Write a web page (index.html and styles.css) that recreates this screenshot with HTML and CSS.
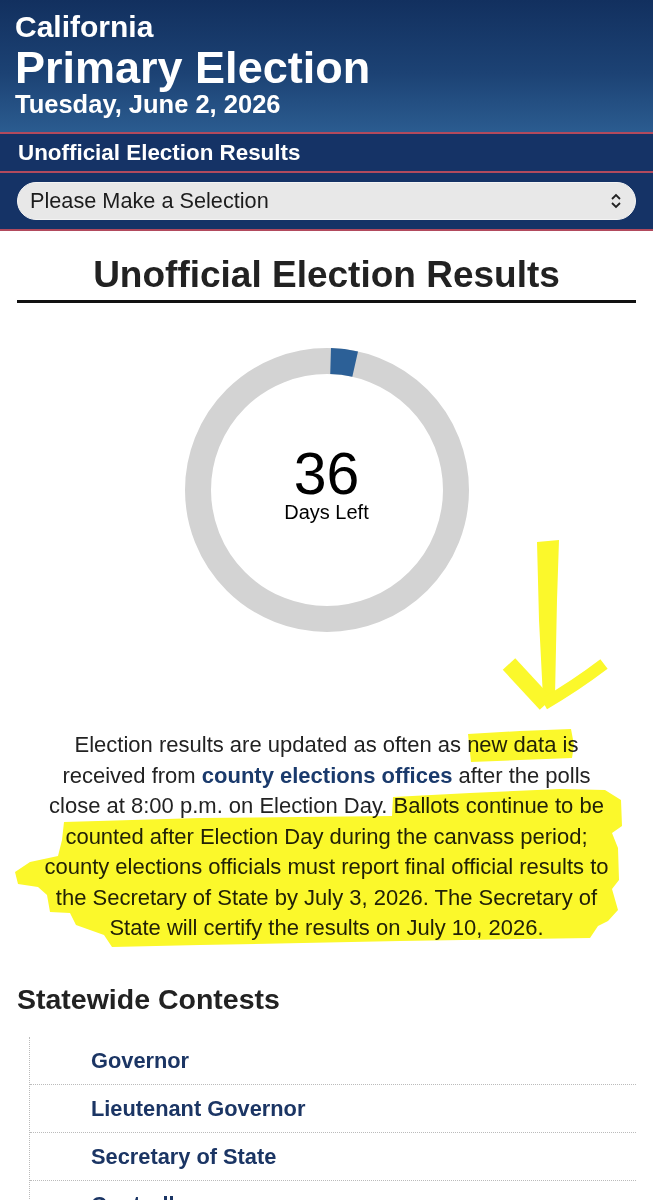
FILE: index.html
```html
<!DOCTYPE html>
<html>
<head>
  <title>California Primary Election - Unofficial Election Results</title>
  <link rel="stylesheet" href="styles.css">
</head>
<body>
  <div id="page">
    <div id="header">
      <div class="state">California</div>
      <div class="election">Primary Election</div>
      <div class="date">Tuesday, June 2, 2026</div>
    </div>

    <div id="titleBar">Unofficial Election Results</div>

    <div id="selectBar">
      <div class="select-box">
        <span>Please Make a Selection</span>
        <svg class="chevrons" width="12" height="18" viewBox="0 0 12 18">
          <path d="M2 7 L6 3 L10 7" fill="none" stroke="#222" stroke-width="1.8"/>
          <path d="M2 11 L6 15 L10 11" fill="none" stroke="#222" stroke-width="1.8"/>
        </svg>
      </div>
    </div>

    <div id="content">
      <h1 class="page-title">Unofficial Election Results</h1>

      <!-- countdown dial -->
      <div class="dial">
        <svg width="288" height="288" viewBox="0 0 288 288">
          <circle cx="144" cy="144" r="129" fill="none" stroke="#d3d3d3" stroke-width="26"/>
          <circle cx="144" cy="144" r="129" fill="none" stroke="#2c6097" stroke-width="26"
                  stroke-dasharray="24.8 800" transform="rotate(-88.4 144 144)"/>
        </svg>
        <div class="dial-text">
          <div class="days">36</div>
          <div class="days-label">Days Left</div>
        </div>
      </div>

      <p class="notice">
        Election results are updated as often as new data is received from
        <a href="#">county elections offices</a> after the polls close at 8:00 p.m. on
        Election Day. Ballots continue to be counted after Election Day during the canvass
        period; county elections officials must report final official results to the
        Secretary of State by July 3, 2026. The Secretary of State will certify the
        results on July 10, 2026.
      </p>

      <h2 class="section-title">Statewide Contests</h2>
      <ul class="contest-list">
        <li><a href="#">Governor</a></li>
        <li><a href="#">Lieutenant Governor</a></li>
        <li><a href="#">Secretary of State</a></li>
        <li><a href="#">Controller</a></li>
      </ul>
    </div>

    <!-- yellow marker annotations drawn over the page -->
    <svg class="marker" width="653" height="1200" viewBox="0 0 653 1200">
      <g fill="#fbf82b">
        <polygon points="468,734 520,731 571,729 574,745 572,758 520,760 471,762"/>
        <polygon points="393,797 470,793 560,789 605,790 621,800 622,826 612,833 618,848 619,880 612,889 618,910 608,921 598,926 590,938 400,941 200,945 112,947 104,935 76,925 70,913 50,912 47,895 38,887 18,884 15,872 30,862 58,856 62,840 64,822 200,818 392,816"/>
        <polygon points="537,542 559,540 557,600 555,696 543,698 539,620"/>
      </g>
      <g fill="none" stroke="#fbf82b" stroke-linecap="butt">
        <path d="M509 664 L546 704" stroke-width="17"/>
        <path d="M604 664 Q575 686 544 704" stroke-width="12"/>
      </g>
    </svg>
  </div>
</body>
</html>
```

FILE: styles.css
```css
body {
  margin: 0;
  font-family: "Liberation Sans", Arial, Helvetica, sans-serif;
  color: #222;
  background: #fff;
}

#page {
  position: relative;
  width: 653px;
  height: 1200px;
  overflow: hidden;
}

#header {
  background: linear-gradient(to bottom, #12305f 0%, #1c4274 55%, #2b5c90 100%);
  color: #fff;
  font-weight: bold;
  padding: 12px 15px 15px;
  border-bottom: 2px solid #b24a5d;
}

#header .state {
  font-size: 30px;
  line-height: 30px;
}

#header .election {
  font-size: 45px;
  line-height: 45px;
  margin-top: 3px;
}

#header .date {
  font-size: 25.5px;
  line-height: 26px;
  margin-top: 1px;
}

#titleBar {
  background-color: #153366;
  color: #fff;
  font-weight: bold;
  font-size: 22.4px;
  height: 37px;
  line-height: 37px;
  padding-left: 18px;
  border-bottom: 2px solid #b24a5d;
}

#selectBar {
  background-color: #153366;
  padding: 9px 17px 9px;
  border-bottom: 2px solid #b24a5d;
}

.select-box {
  display: flex;
  align-items: center;
  justify-content: space-between;
  height: 36px;
  padding: 0 13px 0 12px;
  background-color: #e8e8e8;
  border: 1px solid #f4f4f4;
  border-radius: 19px;
  color: #1c1c1c;
  font-size: 21.7px;
}

#content {
  padding: 0 17px 40px;
}

.page-title {
  margin: 25px 0 0;
  padding-bottom: 7px;
  border-bottom: 3px solid #111;
  text-align: center;
  font-size: 37px;
  line-height: 37px;
  color: #222;
}

.dial {
  display: grid;
  place-items: center;
  margin-top: 43px;
}

.dial svg,
.dial .dial-text {
  grid-area: 1 / 1;
}

.dial-text {
  text-align: center;
  color: #000;
  margin-top: -12px;
}

.days {
  font-size: 59px;
  line-height: 58px;
  margin-bottom: -2px;
}

.days-label {
  font-size: 20px;
  line-height: 22px;
}

.notice {
  margin: 96px auto 0;
  width: 576px;
  text-align: center;
  font-size: 22px;
  line-height: 30.5px;
  color: #222;
}

.notice a {
  color: #1a3a6c;
  font-weight: bold;
  text-decoration: none;
}

.section-title {
  margin: 41px 0 0;
  font-size: 28.5px;
  line-height: 28px;
  color: #222;
}

.contest-list {
  list-style: none;
  margin: 24px 0 0 12px;
  padding: 0;
  border-left: 1px dotted #bbb;
}

.contest-list li {
  height: 47px;
  line-height: 47px;
  padding-left: 61px;
  border-bottom: 1px dotted #bbb;
}

.contest-list a {
  color: #1b3564;
  font-weight: bold;
  font-size: 21.8px;
  text-decoration: none;
}

.marker {
  position: absolute;
  top: 0;
  left: 0;
  pointer-events: none;
  mix-blend-mode: multiply;
}
```
